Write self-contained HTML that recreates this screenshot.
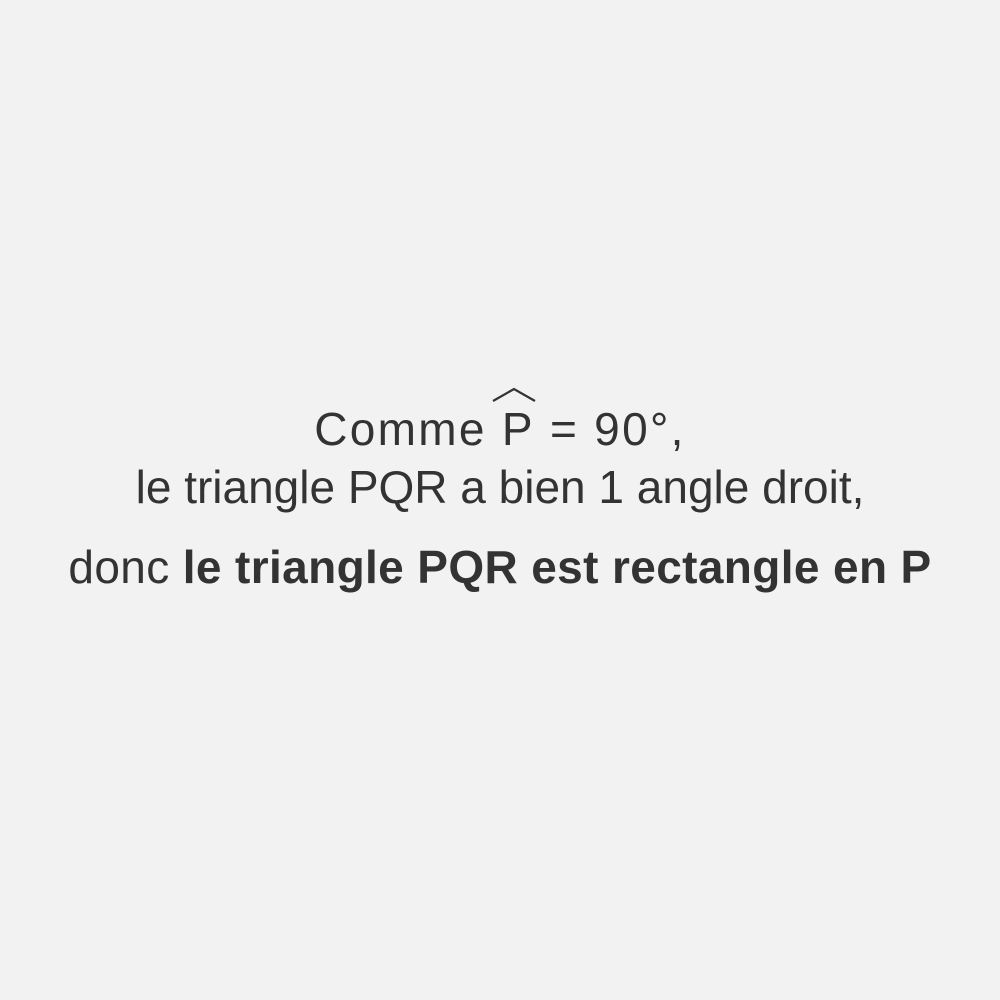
<!DOCTYPE html>
<html><head><meta charset="utf-8"><style>
html,body{margin:0;padding:0;background:#f2f2f2;}
body{width:1000px;height:1000px;position:relative;overflow:hidden;font-family:"Liberation Sans",sans-serif;color:#333;}
.l{position:absolute;left:0;width:1000px;text-align:center;font-size:46px;line-height:50px;white-space:nowrap;}
b{font-weight:bold;}
.p{position:relative;display:inline-block;}
.p svg{position:absolute;left:-11px;top:-20px;}
</style></head><body>
<div class="l" style="top:404px;letter-spacing:2.3px">Comme <span class="p">P<svg width="46" height="20"><path d="M2 17 L23 5 L44 17" fill="none" stroke="#333" stroke-width="2.2"/></svg></span> = 90°,</div>
<div class="l" style="top:462px">le triangle PQR a bien 1 angle droit,</div>
<div class="l" style="top:542px;letter-spacing:0.37px">donc <b>le triangle PQR est rectangle en P</b></div>
</body></html>
